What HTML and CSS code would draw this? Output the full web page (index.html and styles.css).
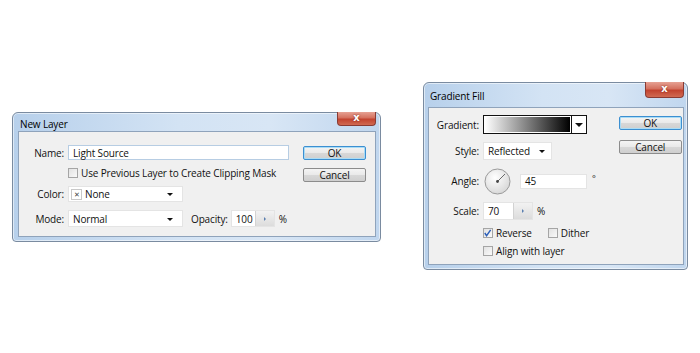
FILE: index.html
```html
<!DOCTYPE html>
<html lang="en">
  <head>
    <meta charset="UTF-8" />
    <title>New Layer / Gradient Fill</title>
    <link rel="stylesheet" href="styles.css">
  </head>
  <body>
    <div class="window new-layer">
      <div class="titlebar">
        <span class="title">New Layer</span>
        <span class="close">x</span>
      </div>
      <div class="client">
        <div class="form nl-form">
          <label class="lbl">Name:</label>
          <div class="field name-input">Light Source</div>

          <span></span>
          <div class="check-row">
            <span class="checkbox"></span>
            <span>Use Previous Layer to Create Clipping Mask</span>
          </div>

          <label class="lbl">Color:</label>
          <div class="field select color-select">
            <span class="swatch">&#x2715;</span>
            <span class="grow">None</span>
            <span class="arrow"></span>
          </div>

          <label class="lbl">Mode:</label>
          <div class="mode-row">
            <div class="field select mode-select">
              <span class="grow">Normal</span>
              <span class="arrow"></span>
            </div>
            <span class="lbl opacity-lbl">Opacity:</span>
            <div class="field stepper opacity">
              <span class="grow">100</span>
              <span class="step"></span>
            </div>
            <span class="unit">%</span>
          </div>
        </div>
        <div class="buttons nl-buttons">
          <div class="btn default">OK</div>
          <div class="btn">Cancel</div>
        </div>
      </div>
    </div>

    <div class="window gradient-fill">
      <div class="titlebar">
        <span class="title">Gradient Fill</span>
        <span class="close">x</span>
      </div>
      <div class="client">
        <div class="form gf-form">
          <label class="lbl">Gradient:</label>
          <div class="gradient-pick">
            <span class="ramp"></span>
            <span class="gp-arrow"></span>
          </div>

          <label class="lbl">Style:</label>
          <div class="field select style-select">
            <span class="grow">Reflected</span>
            <span class="arrow"></span>
          </div>

          <label class="lbl">Angle:</label>
          <div class="angle-row">
            <svg class="dial" width="27" height="27" viewBox="0 0 27 27">
              <defs>
                <radialGradient id="dialfill" cx="40%" cy="35%" r="70%">
                  <stop offset="0" stop-color="#ffffff"/>
                  <stop offset="1" stop-color="#d6d6d6"/>
                </radialGradient>
              </defs>
              <circle cx="13.5" cy="13.5" r="12.5" fill="url(#dialfill)" stroke="#9a9a9a" stroke-width="1"/>
              <line x1="13.5" y1="13.5" x2="21" y2="6" stroke="#6a6a6a" stroke-width="1"/>
              <circle cx="13.5" cy="13.5" r="1.4" fill="#444"/>
            </svg>
            <div class="field angle-input">45</div>
            <span class="deg">&deg;</span>
          </div>

          <label class="lbl">Scale:</label>
          <div class="scale-row">
            <div class="field stepper scale">
              <span class="grow">70</span>
              <span class="step"></span>
            </div>
            <span class="unit">%</span>
          </div>

          <span></span>
          <div class="check-row">
            <span class="checkbox checked"><svg width="10" height="10" viewBox="0 0 10 10"><path d="M2 5 L4 8 L8.5 1.5" fill="none" stroke="#2d5fb8" stroke-width="1.6"/></svg></span>
            <span>Reverse</span>
            <span class="checkbox dither"></span>
            <span>Dither</span>
          </div>

          <span></span>
          <div class="check-row">
            <span class="checkbox"></span>
            <span>Align with layer</span>
          </div>
        </div>
        <div class="buttons gf-buttons">
          <div class="btn default">OK</div>
          <div class="btn">Cancel</div>
        </div>
      </div>
    </div>
  </body>
</html>
```

FILE: styles.css
```css
body {
  margin: 0;
  background: #ffffff;
  font-family: "Open Sans", "Noto Sans", sans-serif;
  font-size: 10px;
  letter-spacing: -0.15px;
  color: #111;
  display: flex;
  align-items: flex-start;
  height: 353px;
  overflow: hidden;
}
.window {
  box-sizing: border-box;
  border: 1px solid #7a8ba0;
  border-radius: 6px 6px 4px 4px;
  background: linear-gradient(to right, #b7d0eb, #d3e3f4 45%, #d8e6f5 70%, #c0d6ee);
  box-shadow: inset 0 0 0 1px rgba(255, 255, 255, 0.55);
  display: flex;
  flex-direction: column;
}
.new-layer {
  width: 369px;
  height: 130px;
  margin: 112px 0 0 12px;
  padding: 0 4px 4px 5px;
}
.gradient-fill {
  width: 265px;
  height: 188px;
  margin: 82px 0 0 42px;
  padding: 0 3px 4px 4px;
}
.titlebar {
  display: flex;
  justify-content: space-between;
  align-items: flex-start;
}
.new-layer .titlebar {
  height: 18px;
}
.gradient-fill .titlebar {
  height: 24px;
}
.title {
  color: #000;
  padding: 4px 0 0 2px;
}
.gradient-fill .title {
  padding-top: 6px;
}
.close {
  width: 39px;
  height: 14px;
  margin-top: -1px;
  box-sizing: border-box;
  border: 1px solid #8a3b33;
  border-top: none;
  border-radius: 0 0 4px 4px;
  background: linear-gradient(#e6a193, #d4705e 45%, #c2432f 55%, #d06a52);
  color: #fff;
  font-family: "DejaVu Sans", sans-serif;
  letter-spacing: 0;
  font-weight: bold;
  font-size: 10px;
  line-height: 12px;
  text-align: center;
  text-shadow: 0 0 2px #7a2016;
}
.gradient-fill .close {
  height: 16px;
  line-height: 14px;
}
.client {
  flex: 1;
  box-sizing: border-box;
  border: 1px solid #8fa3bb;
  background: #f0f0f0;
  display: flex;
  align-items: flex-start;
}
.form {
  display: grid;
  column-gap: 4px;
  align-items: center;
  justify-items: start;
}
.nl-form {
  grid-template-columns: 45px 221px;
  grid-template-rows: 15px 10px 16px 17px;
  row-gap: 8px;
  margin-top: 13px;
}
.gf-form {
  grid-template-columns: 50px auto;
  grid-template-rows: 19px 18px 26px 18px 10px 10px;
  row-gap: 8px;
  margin-top: 7px;
}
.lbl {
  justify-self: end;
  text-align: right;
  white-space: nowrap;
}
.field {
  box-sizing: border-box;
  height: 100%;
  background: #fff;
  border: 1px solid #e4e4e4;
  display: flex;
  align-items: center;
  padding-left: 4px;
  white-space: nowrap;
}
.name-input {
  width: 221px;
  border-color: #b7cde3;
}
.grow {
  flex: 1;
}
.select .arrow {
  width: 0;
  height: 0;
  border-left: 3px solid transparent;
  border-right: 3px solid transparent;
  border-top: 3px solid #111;
  margin: 1px 9px 0 4px;
}
.color-select {
  width: 115px;
  padding-left: 2px;
}
.swatch {
  width: 11px;
  height: 11px;
  box-sizing: border-box;
  border: 1px solid #c8c8c8;
  font-size: 7px;
  line-height: 9px;
  text-align: center;
  color: #444;
  margin-right: 3px;
}
.mode-row,
.scale-row,
.angle-row {
  display: flex;
  align-items: center;
  height: 100%;
}
.mode-select {
  width: 115px;
}
.opacity-lbl {
  margin: 0 3px 0 8px;
}
.stepper {
  padding-right: 0;
}
.stepper .step {
  width: 18px;
  height: 100%;
  background: linear-gradient(#f2f2f2, #dcdcdc);
  border-left: 1px solid #d2d2d2;
  position: relative;
}
.stepper .step::after {
  content: "";
  position: absolute;
  left: 8px;
  top: 50%;
  margin-top: -2px;
  border-top: 2px solid transparent;
  border-bottom: 2px solid transparent;
  border-left: 2px solid #5a7fb0;
}
.opacity {
  width: 44px;
}
.unit {
  margin-left: 4px;
}
.check-row {
  display: flex;
  align-items: center;
  height: 100%;
  white-space: nowrap;
}
.checkbox {
  flex-shrink: 0;
  width: 10px;
  height: 10px;
  box-sizing: border-box;
  border: 1px solid #a5a5a5;
  background: linear-gradient(135deg, #e2e2e2, #fafafa);
  margin-right: 3px;
  display: flex;
}
.checkbox.checked svg {
  margin: -1px 0 0 -1px;
}
.checkbox.dither {
  margin-left: 16px;
}
.buttons {
  display: flex;
  flex-direction: column;
}
.nl-buttons {
  margin: 14px 0 0 14px;
  gap: 8px;
}
.gf-buttons {
  margin: 8px 0 0 23px;
  gap: 10px;
}
.btn {
  box-sizing: border-box;
  width: 63px;
  height: 14px;
  border: 1px solid #8c8c8c;
  border-radius: 2px;
  background: linear-gradient(#f4f4f4, #e9e9e9 50%, #d8d8d8 51%, #cfcfcf);
  text-align: center;
  line-height: 12px;
}
.btn.default {
  border-color: #3c8fd1;
  box-shadow: inset 0 0 0 1px #a9dcf6;
}
.gradient-pick {
  box-sizing: border-box;
  width: 104px;
  height: 100%;
  border: 1px solid #111;
  display: flex;
  background: #fff;
}
.ramp {
  flex: 1;
  margin: 1px;
  background: linear-gradient(to right, #ffffff, #000000);
}
.gp-arrow {
  width: 14px;
  border-left: 1px solid #111;
  position: relative;
}
.gp-arrow::after {
  content: "";
  position: absolute;
  left: 3px;
  top: 7px;
  border-left: 4px solid transparent;
  border-right: 4px solid transparent;
  border-top: 4px solid #111;
}
.style-select {
  width: 69px;
}
.style-select .arrow {
  margin-right: 6px;
}
.dial {
  margin-left: 1px;
}
.angle-input {
  width: 67px;
  height: 15px;
  margin-left: 9px;
}
.deg {
  margin: -6px 0 0 5px;
  font-size: 9px;
}
.scale {
  width: 50px;
}
```
